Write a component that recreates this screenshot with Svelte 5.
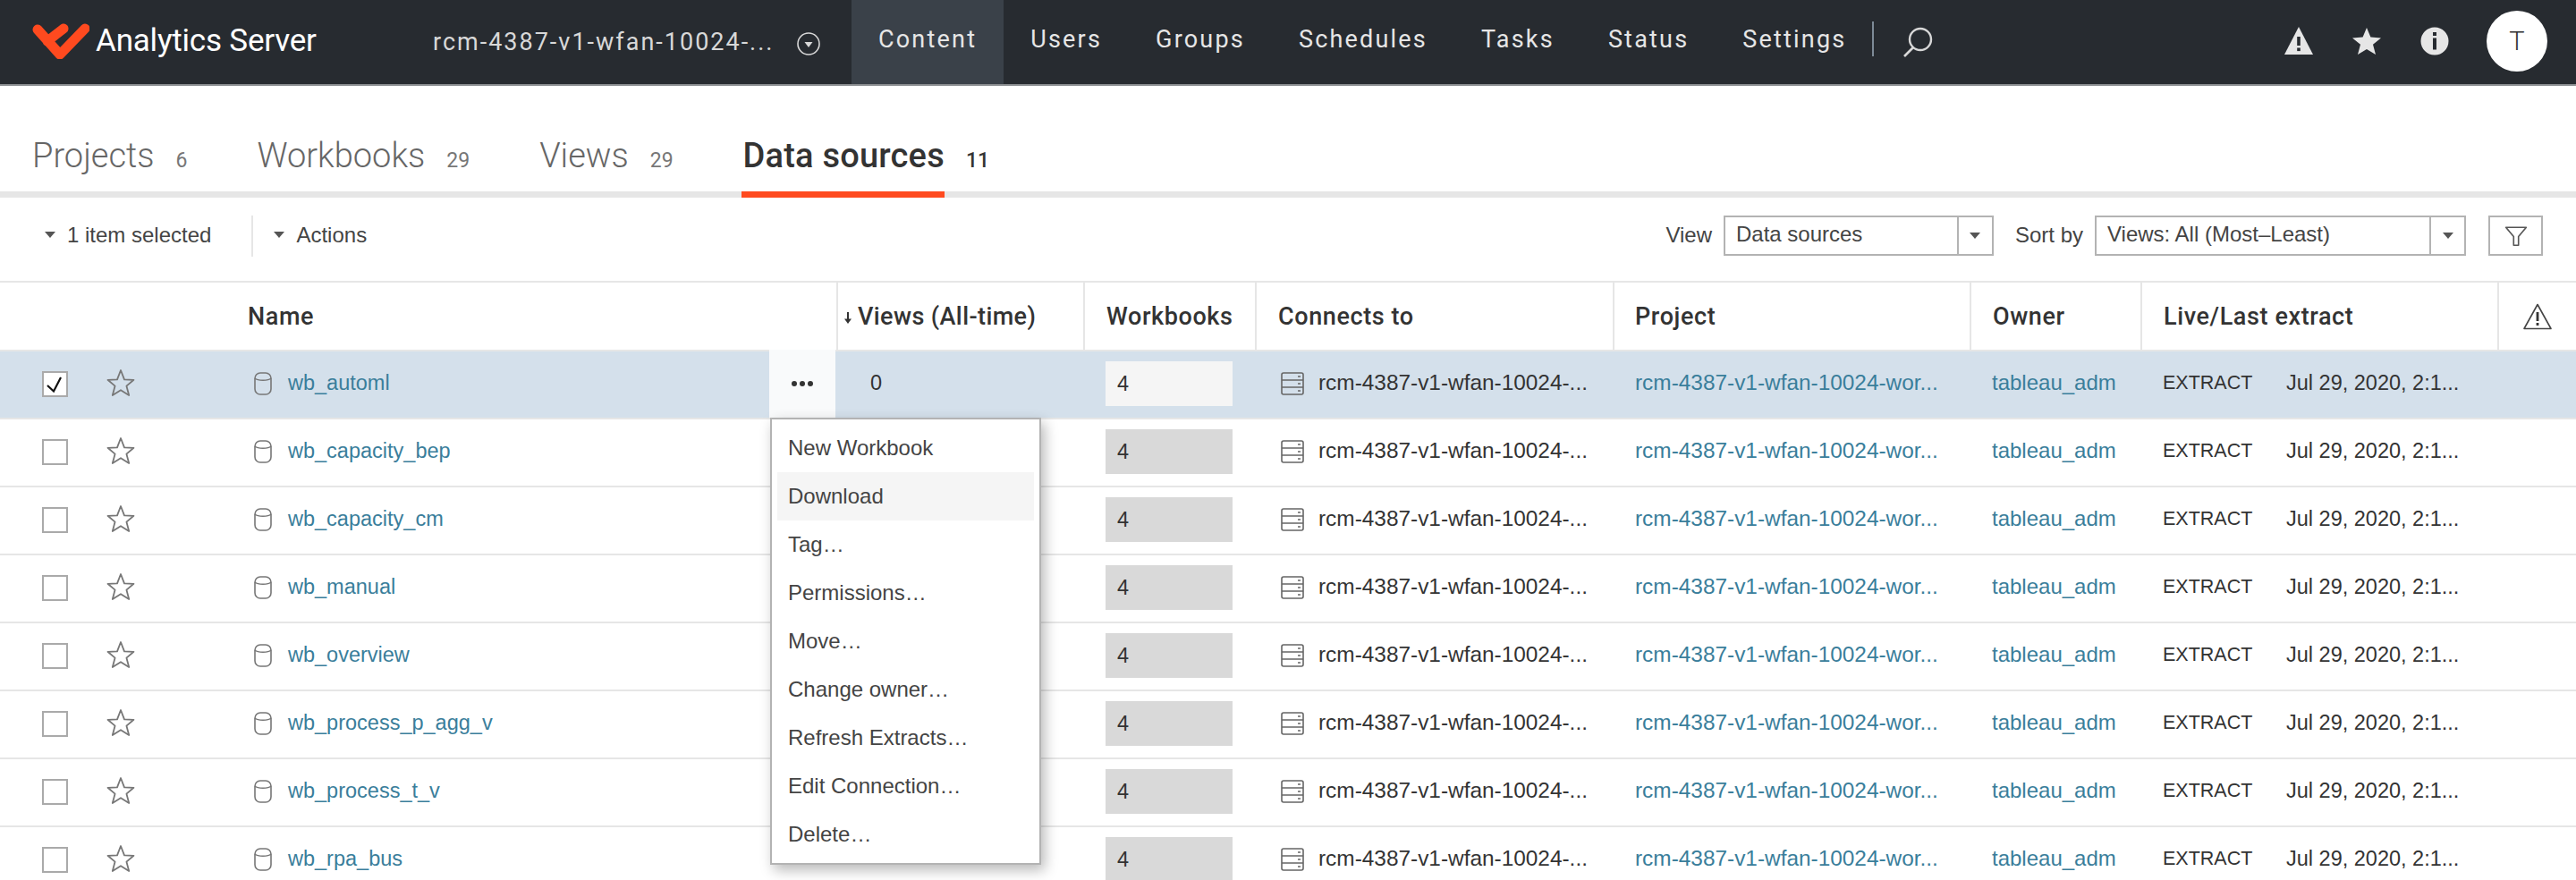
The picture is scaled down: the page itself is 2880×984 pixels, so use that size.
<script>
	const navItems = ['Users', 'Groups', 'Schedules', 'Tasks', 'Status', 'Settings'];
	const tabs = [
		{ label: 'Projects', count: 6 },
		{ label: 'Workbooks', count: 29 },
		{ label: 'Views', count: 29 },
		{ label: 'Data sources', count: 11, active: true }
	];
	const rows = [
		'wb_automl',
		'wb_capacity_bep',
		'wb_capacity_cm',
		'wb_manual',
		'wb_overview',
		'wb_process_p_agg_v',
		'wb_process_t_v',
		'wb_rpa_bus'
	];
	const menuItems = [
		'New Workbook',
		'Download',
		'Tag…',
		'Permissions…',
		'Move…',
		'Change owner…',
		'Refresh Extracts…',
		'Edit Connection…',
		'Delete…'
	];
</script>

<div class="page">
	<header class="topbar">
		<div class="brand">
			<svg class="logo" viewBox="0 0 64 40" aria-hidden="true">
				<path d="M6 7 L31 35 L59 6 M35 6 L17 20" fill="none" stroke="#ff4a1f" stroke-width="11" stroke-linecap="round" stroke-linejoin="round" />
			</svg>
			<span class="brand-name">Analytics Server</span>
		</div>
		<div class="site">
			<span class="site-name">rcm-4387-v1-wfan-10024-...</span>
			<svg class="site-icon" viewBox="0 0 26 26" aria-hidden="true">
				<circle cx="13" cy="13" r="12" fill="none" stroke="#d8d8d8" stroke-width="1.6" />
				<path d="M8.5 11 H17.5 L13 17 Z" fill="#d8d8d8" />
			</svg>
		</div>
		<nav class="nav">
			<span class="nav-item active">Content</span>
			{#each navItems as item}
				<span class="nav-item">{item}</span>
			{/each}
			<span class="nav-sep"></span>
			<svg class="search" viewBox="0 0 34 34" aria-hidden="true">
				<circle cx="20" cy="14" r="12" fill="none" stroke="#d8d8d8" stroke-width="2.4" />
				<path d="M12 23 L2 33" stroke="#d8d8d8" stroke-width="2.6" />
			</svg>
		</nav>
		<div class="top-icons">
			<svg class="top-icon" viewBox="0 0 32 32" aria-hidden="true">
				<path d="M16 0 L32 31 H0 Z" fill="#e6e6e6" />
				<rect x="14.2" y="11" width="3.6" height="10" fill="#272b30" />
				<rect x="14.2" y="23.5" width="3.6" height="3.6" fill="#272b30" />
			</svg>
			<svg class="top-icon" viewBox="0 0 32 32" aria-hidden="true">
				<path d="M16 1 L20.4 11.6 L32 12.4 L23 19.8 L26 31 L16 25 L6 31 L9 19.8 L0 12.4 L11.6 11.6 Z" fill="#e6e6e6" />
			</svg>
			<svg class="top-icon" viewBox="0 0 32 32" aria-hidden="true">
				<circle cx="16" cy="16" r="15.5" fill="#e6e6e6" />
				<rect x="14" y="6" width="4" height="4" fill="#272b30" />
				<rect x="14" y="12.5" width="4" height="13" fill="#272b30" />
			</svg>
			<div class="avatar">T</div>
		</div>
	</header>

	<div class="tabs">
		{#each tabs as tab}
			<div class="tab" class:active={tab.active}>
				<span class="tab-label">{tab.label}</span>
				<span class="tab-count">{tab.count}</span>
			</div>
		{/each}
	</div>

	<div class="toolbar">
		<div class="tool-left">
			<span class="drop"><i class="caret"></i>1 item selected</span>
			<span class="tool-sep"></span>
			<span class="drop"><i class="caret"></i>Actions</span>
		</div>
		<div class="tool-right">
			<span class="tool-label">View</span>
			<div class="select view-select">
				<span class="select-text">Data sources</span>
				<span class="select-btn"><i class="caret"></i></span>
			</div>
			<span class="tool-label sort-label">Sort by</span>
			<div class="select sort-select">
				<span class="select-text">Views: All (Most–Least)</span>
				<span class="select-btn"><i class="caret"></i></span>
			</div>
			<div class="filter">
				<svg viewBox="0 0 24 24" width="26" height="26" aria-hidden="true">
					<path d="M1.5 3 H22.5 L14.5 12.5 V21.5 H9.5 V12.5 Z" fill="none" stroke="#555" stroke-width="1.5" stroke-linejoin="round" />
				</svg>
			</div>
		</div>
	</div>

	<div class="table">
		<div class="row head">
			<div class="cell name-cell"><span class="name-head">Name</span></div>
			<div class="cell views-cell">
				<svg class="sort-arrow" viewBox="0 0 10 16" aria-hidden="true">
					<path d="M5 2 V10" stroke="#333" stroke-width="2" />
					<path d="M1 9.5 H9 L5 15 Z" fill="#333" />
				</svg>
				Views (All-time)
			</div>
			<div class="cell">Workbooks</div>
			<div class="cell">Connects to</div>
			<div class="cell project-head">Project</div>
			<div class="cell">Owner</div>
			<div class="cell">Live/Last extract</div>
			<div class="cell alert-cell">
				<svg viewBox="0 0 32 30" width="32" height="30" aria-hidden="true">
					<path d="M16 1.5 L31 28.5 H1 Z" fill="none" stroke="#444" stroke-width="1.6" stroke-linejoin="round" />
					<rect x="14.6" y="10" width="2.8" height="10" fill="#333" />
					<rect x="14.6" y="22" width="2.8" height="3" fill="#333" />
				</svg>
			</div>
		</div>

		{#each rows as name, i}
			<div class="row body" class:selected={i === 0}>
				<div class="cell name-cell">
					<span class="check">
						{#if i === 0}
							<svg viewBox="0 0 25 25" width="25" height="25" aria-hidden="true">
								<path d="M4 14 L11 20.5 L19 5" fill="none" stroke="#111" stroke-width="2.2" />
							</svg>
						{/if}
					</span>
					<svg class="star" viewBox="0 0 32 32" aria-hidden="true">
						<path d="M16 2 L20 12.4 L30.5 12.8 L22.4 19.6 L25.2 30 L16 24.2 L6.8 30 L9.6 19.6 L1.5 12.8 L12 12.4 Z" fill="none" stroke="#777" stroke-width="1.8" stroke-linejoin="round" />
					</svg>
					<svg class="cyl" viewBox="0 0 20 26" aria-hidden="true">
						<rect x="1" y="1" width="18" height="24" rx="6" fill="none" stroke="#777" stroke-width="1.6" />
						<path d="M1 7 C4 10 16 10 19 7" fill="none" stroke="#777" stroke-width="1.6" />
					</svg>
					<a class="link" href="#top">{name}</a>
					{#if i === 0}
						<span class="more"><b></b><b></b><b></b></span>
					{/if}
				</div>
				<div class="cell views-cell views-val">{i === 0 ? '0' : ''}</div>
				<div class="cell"><span class="wb-box">4</span></div>
				<div class="cell conn-cell">
					<svg class="server" viewBox="0 0 26 26" aria-hidden="true">
						<rect x="1" y="1" width="24" height="24" rx="2" fill="none" stroke="#666" stroke-width="1.6" />
						<path d="M1 9 H25 M1 17 H25" stroke="#666" stroke-width="1.6" />
						<path d="M19 5 H22 M19 13 H22 M19 21 H22" stroke="#666" stroke-width="1.6" />
					</svg>
					<span class="txt wide">rcm-4387-v1-wfan-10024-...</span>
				</div>
				<div class="cell"><a class="link wide" href="#top">rcm-4387-v1-wfan-10024-wor...</a></div>
				<div class="cell"><a class="link owner" href="#top">tableau_adm</a></div>
				<div class="cell extract-cell">
					<span class="txt extract">EXTRACT</span>
					<span class="txt">Jul 29, 2020, 2:1...</span>
				</div>
				<div class="cell"></div>
			</div>
		{/each}

		<ul class="menu">
			{#each menuItems as item, i}
				<li class:hover={i === 1}>{item}</li>
			{/each}
		</ul>
	</div>
</div>

<style>
	:global(body) {
		margin: 0;
		overflow: hidden;
		background: #fff;
	}

	.page {
		width: 2880px;
		height: 984px;
		overflow: hidden;
		font-family: 'Liberation Sans', Arial, sans-serif;
		font-size: 23.5px;
		color: #333;
	}

	/* top bar */
	.topbar {
		display: flex;
		height: 94px;
		background: #272b30;
		border-bottom: 2px solid #8a8d90;
		box-sizing: content-box;
		color: #e6e6e6;
		font-family: Roboto, sans-serif;
	}

	.brand {
		display: flex;
		align-items: center;
		width: 484px;
		padding-left: 36px;
		box-sizing: border-box;
		gap: 7px;
	}

	.logo {
		width: 64px;
		height: 40px;
		margin-top: -2px;
	}

	.brand-name {
		font-size: 35px;
		font-weight: 400;
		color: #fff;
		letter-spacing: -0.2px;
		margin-top: -3px;
	}

	.site {
		display: flex;
		align-items: center;
		width: 468px;
		gap: 27px;
	}

	.site-name {
		font-size: 27px;
		letter-spacing: 2px;
		width: 380px;
		white-space: nowrap;
		color: #d8d8d8;
	}

	.site-icon {
		width: 26px;
		height: 26px;
		margin-top: 3px;
	}

	.nav {
		display: flex;
		align-items: stretch;
	}

	.nav-item {
		display: flex;
		align-items: center;
		padding: 0 30px;
		font-size: 27px;
		letter-spacing: 2.2px;
		padding-bottom: 6px;
		box-sizing: border-box;
	}

	.nav-item.active {
		background: #3a4149;
	}

	.nav-sep {
		width: 2px;
		height: 39px;
		margin: 24px 0 0 -1px;
		background: #7d8a96;
	}

	.search {
		width: 34px;
		height: 34px;
		margin: 30px 0 0 32px;
	}

	.top-icons {
		display: flex;
		align-items: center;
		margin-left: auto;
		padding-right: 32px;
		gap: 44px;
	}

	.top-icon {
		width: 32px;
		height: 32px;
		margin-top: -2px;
	}

	.avatar {
		display: flex;
		align-items: center;
		justify-content: center;
		width: 68px;
		height: 68px;
		margin-left: -2px;
		border-radius: 50%;
		background: #fff;
		color: #333;
		font-size: 29px;
		font-weight: 300;
		margin-top: -2px;
	}

	/* tabs */
	.tabs {
		display: flex;
		height: 125px;
		box-sizing: border-box;
		padding-left: 36px;
		gap: 78px;
		border-bottom: 7px solid #e6e6e6;
		font-family: Roboto, sans-serif;
	}

	.tab {
		display: flex;
		align-items: baseline;
		gap: 24px;
		height: 125px;
		box-sizing: border-box;
		padding-top: 56px;
		color: #666;
	}

	.tab-label {
		position: relative;
		font-size: 38px;
		line-height: 45px;
		font-weight: 300;
	}

	.tab-count {
		font-size: 23px;
		font-weight: 400;
		color: #777;
	}

	.tab.active {
		color: #333;
	}

	.tab.active .tab-label {
		font-weight: 500;
		letter-spacing: 0.2px;
	}

	.tab.active .tab-label::after {
		content: '';
		position: absolute;
		left: -2px;
		right: 0;
		top: 62px;
		height: 7px;
		background: #ff4a1f;
	}

	.tab.active .tab-count {
		color: #333;
		font-weight: 500;
	}

	/* toolbar */
	.toolbar {
		display: flex;
		align-items: center;
		justify-content: space-between;
		height: 95px;
		box-sizing: border-box;
		padding: 0 37px 8px 50px;
		border-bottom: 2px solid #e6e6e6;
		color: #444;
		font-size: 24px;
	}

	.tool-left,
	.tool-right {
		display: flex;
		align-items: center;
	}

	.drop {
		display: flex;
		align-items: center;
		gap: 13px;
		margin-top: -2px;
	}

	.caret {
		display: inline-block;
		width: 0;
		height: 0;
		border-left: 6px solid transparent;
		border-right: 6px solid transparent;
		border-top: 7px solid #555;
	}

	.tool-sep {
		width: 2px;
		height: 46px;
		margin: 0 23px 0 45px;
		background: #e6e6e6;
	}

	.tool-label {
		margin-right: 13px;
		margin-top: -2px;
	}

	.sort-label {
		margin-left: 24px;
	}

	.select {
		display: flex;
		height: 45px;
		box-sizing: border-box;
		border: 2px solid #b3b3b3;
		background: #fff;
	}

	.select-text {
		flex: 1;
		padding-left: 12px;
		line-height: 38px;
		white-space: nowrap;
	}

	.select-btn {
		display: flex;
		align-items: center;
		justify-content: center;
		width: 37px;
		border-left: 2px solid #b3b3b3;
	}

	.view-select {
		width: 302px;
	}

	.sort-select {
		width: 415px;
	}

	.filter {
		display: flex;
		align-items: center;
		justify-content: center;
		width: 61px;
		height: 45px;
		box-sizing: border-box;
		margin-left: 25px;
		border: 2px solid #b3b3b3;
	}

	/* table */
	.table {
		position: relative;
	}

	.row {
		display: grid;
		grid-template-columns: 935px 276px 192px 400px 399px 191px 399px 88px;
	}

	.head {
		height: 75px;
		font-family: Roboto, sans-serif;
		font-weight: 500;
		font-size: 27px;
		letter-spacing: 0.6px;
		color: #333;
	}

	.head .cell {
		border-left: 2px solid #e6e6e6;
		padding-left: 24px;
	}

	.head .name-cell {
		border-left: 0;
		padding-left: 277px;
	}

	.head .views-cell {
		padding-left: 6px;
		letter-spacing: 0.4px;
	}

	.head .project-head {
		padding-left: 23px;
	}

	.sort-arrow {
		width: 10px;
		height: 16px;
		margin: 3px 6px 0 0;
		flex: none;
	}

	.head .alert-cell {
		padding-left: 27px;
	}

	.cell {
		display: flex;
		align-items: center;
		box-sizing: border-box;
		padding-left: 25px;
		min-width: 0;
		white-space: nowrap;
	}

	.body {
		height: 76px;
		border-top: 2px solid #e6e6e6;
		box-sizing: border-box;
	}

	.body .cell {
		padding-bottom: 2px;
	}

	.body.selected {
		background: #d4e0eb;
	}

	.body .name-cell {
		position: relative;
		padding-left: 47px;
	}

	.check {
		display: flex;
		align-items: center;
		justify-content: center;
		width: 29px;
		height: 29px;
		box-sizing: border-box;
		border: 2px solid #aaa;
		background: #fff;
		flex: none;
	}

	.star {
		width: 32px;
		height: 32px;
		margin: -3px 0 0 43px;
		flex: none;
	}

	.cyl {
		width: 20px;
		height: 26px;
		margin-left: 133px;
		flex: none;
	}

	.link {
		color: #3a7e9b;
		text-decoration: none;
		margin-bottom: 2px;
	}

	.txt {
		margin-bottom: 2px;
	}

	.name-cell .link {
		margin-left: 18px;
	}

	.wide {
		font-size: 24.4px;
	}

	.owner {
		font-size: 24px;
	}

	.more {
		position: absolute;
		top: -2px;
		bottom: 0;
		right: 1px;
		width: 74px;
		display: flex;
		align-items: center;
		justify-content: center;
		gap: 3px;
		background: #f9fafb;
	}

	.more b {
		width: 6px;
		height: 6px;
		border-radius: 50%;
		background: #333;
	}

	.body .views-val {
		padding-left: 38px;
		padding-bottom: 4px;
	}

	.wb-box {
		display: block;
		width: 142px;
		height: 50px;
		line-height: 50px;
		box-sizing: border-box;
		padding-left: 13px;
		background: #d9d9d9;
	}

	.selected .wb-box {
		background: #f5f5f5;
	}

	.conn-cell {
		gap: 16px;
	}

	.server {
		width: 26px;
		height: 26px;
		margin-left: 4px;
		flex: none;
	}

	.extract {
		font-size: 21.5px;
		width: 138px;
	}

	/* row actions menu */
	.menu {
		position: absolute;
		left: 861px;
		top: 151px;
		width: 303px;
		height: 500px;
		box-sizing: border-box;
		margin: 0;
		padding: 5px 6px 3px;
		list-style: none;
		background: #fff;
		border: 2px solid #b3b3b3;
		box-shadow: 4px 6px 14px rgba(0, 0, 0, 0.28);
		font-size: 24px;
	}

	.menu li {
		height: 54px;
		line-height: 54px;
		padding-left: 12px;
		color: #444;
	}

	.menu li.hover {
		background: #f5f5f5;
	}
</style>
